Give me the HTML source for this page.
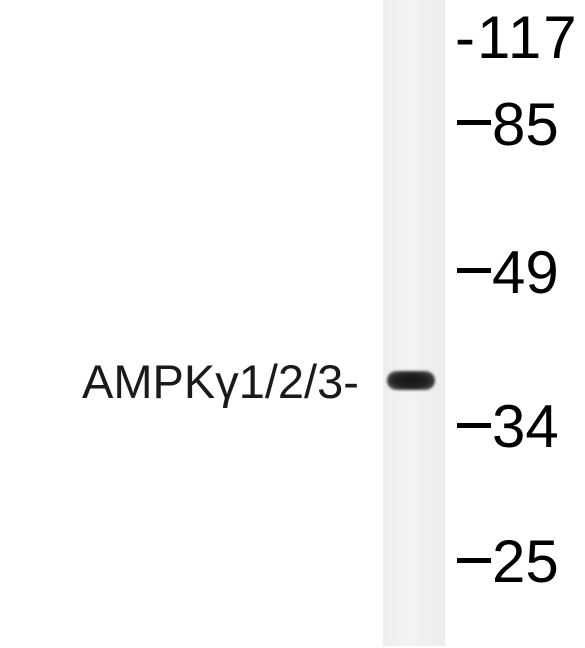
<!DOCTYPE html>
<html><head><meta charset="utf-8"><style>
html,body{margin:0;padding:0;background:#fff;}
body{width:585px;height:648px;position:relative;overflow:hidden;font-family:"Liberation Sans",Arial,sans-serif;color:#111;}
.lane{position:absolute;left:383px;top:0;width:62px;height:646px;background:linear-gradient(90deg,#eeeeee,#f3f3f3 40%,#f0f0f0 70%,#ececec);}
.band{position:absolute;left:387px;top:371px;width:48px;height:19px;border-radius:10px;background:radial-gradient(ellipse at 50% 50%,#151515 0%,#222 50%,#444 75%,rgba(90,90,90,0.5) 100%);filter:blur(1.3px);}
.t{position:absolute;font-size:60px;line-height:60px;white-space:nowrap;color:#000;}
.d{position:absolute;left:457px;width:34px;height:5px;background:#000;}
.lbl{position:absolute;left:82px;top:358px;font-size:47px;line-height:47px;color:#1a1a1a;white-space:nowrap;}
</style></head><body>
<div class="lane"></div>
<div class="band"></div>
<div class="t" style="left:455px;top:8px;letter-spacing:2px;">-117</div>
<div class="d" style="top:120px"></div><div class="t" style="left:492px;top:95px;">85</div>
<div class="d" style="top:268px"></div><div class="t" style="left:492px;top:243px;">49</div>
<div class="d" style="top:423px"></div><div class="t" style="left:492px;top:397px;">34</div>
<div class="d" style="top:558px"></div><div class="t" style="left:492px;top:532px;">25</div>
<div class="lbl">AMPKγ1/2/3-</div>
</body></html>
